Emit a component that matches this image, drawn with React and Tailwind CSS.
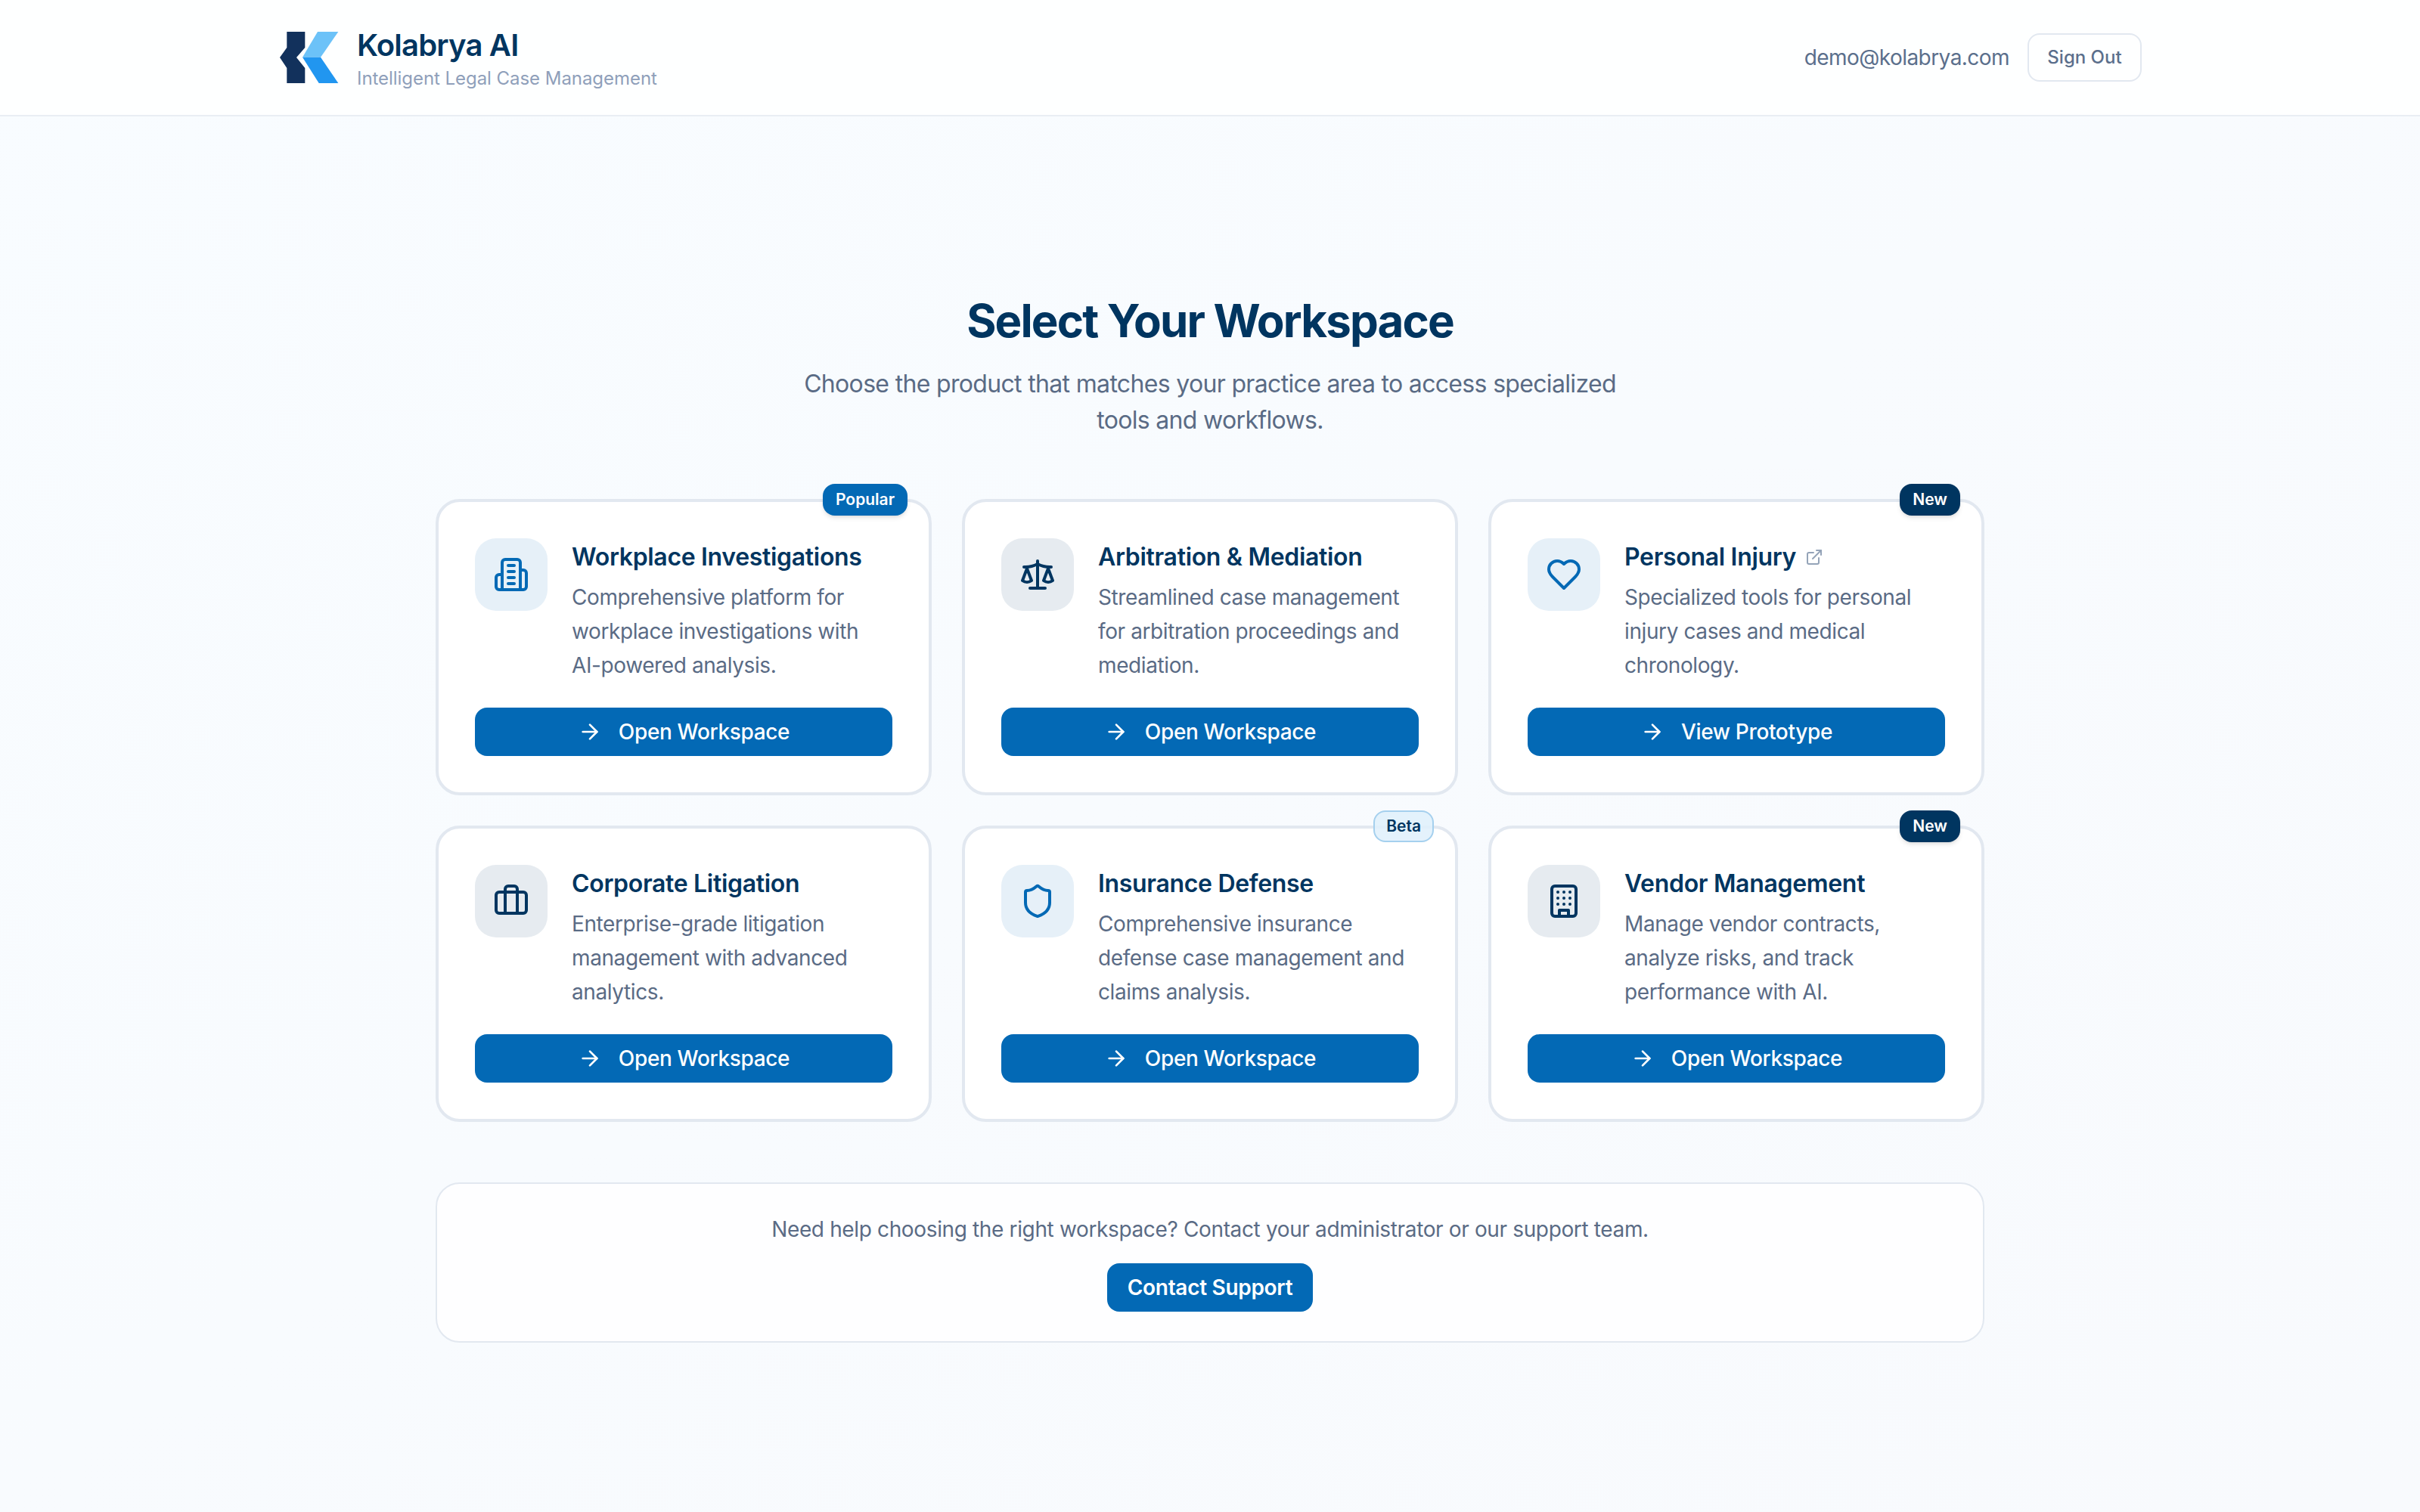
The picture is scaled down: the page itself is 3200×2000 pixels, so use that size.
import { ArrowRight, Scale, Briefcase, Shield, ExternalLink } from 'lucide-react';

const Building2Icon = ({ className }) => (
  <svg viewBox="0 0 24 24" fill="none" stroke="currentColor" strokeWidth="2" strokeLinecap="round" strokeLinejoin="round" className={className}>
    <path d="M6 22V4a2 2 0 0 1 2-2h8a2 2 0 0 1 2 2v18Z" />
    <path d="M6 12H4a2 2 0 0 0-2 2v6a2 2 0 0 0 2 2h2" />
    <path d="M18 9h2a2 2 0 0 1 2 2v9a2 2 0 0 1-2 2h-2" />
    <path d="M10 6h4" />
    <path d="M10 10h4" />
    <path d="M10 14h4" />
    <path d="M10 18h4" />
  </svg>
);

const HeartIcon = ({ className }) => (
  <svg viewBox="0 0 24 24" fill="none" stroke="currentColor" strokeWidth="2" strokeLinecap="round" strokeLinejoin="round" className={className}>
    <path d="M19 14c1.49-1.46 3-3.21 3-5.5A5.5 5.5 0 0 0 16.5 3c-1.76 0-3 .5-4.5 2-1.5-1.5-2.74-2-4.5-2A5.5 5.5 0 0 0 2 8.5c0 2.3 1.5 4.05 3 5.5l7 7Z" />
  </svg>
);

const BuildingIcon = ({ className }) => (
  <svg viewBox="0 0 24 24" fill="none" stroke="currentColor" strokeWidth="2" strokeLinecap="round" strokeLinejoin="round" className={className}>
    <rect x="4" y="2" width="16" height="20" rx="2" />
    <path d="M9 22v-4h6v4" />
    <path d="M8 6h.01M16 6h.01M12 6h.01M12 10h.01M12 14h.01M16 10h.01M16 14h.01M8 10h.01M8 14h.01" />
  </svg>
);

const Logo = () => (
  <svg viewBox="0 0 80 80" className="w-[80px] h-[80px] shrink-0">
    <path fill="#12315c" d="M11.3 6H35.3V27L24 40L35.3 54V74H11.3V54L2 40L11.3 27Z" />
    <path fill="#6cc2f8" d="M52 6H79.3L56 39.7H32Z" />
    <path fill="#2196f0" d="M32 39.7H56L79.3 74H53.7Z" />
  </svg>
);

const badgeStyles = {
  Popular: 'px-[17px] bg-[#0369b5] text-white shadow-md',
  New: 'px-[17px] bg-[#003560] text-white shadow-md',
  Beta: 'px-[15px] bg-[#dff0fc]/85 text-[#003560] border-2 border-[#a5d0ee]',
};

const products = [
  {
    title: 'Workplace Investigations',
    desc: 'Comprehensive platform for workplace investigations with AI-powered analysis.',
    icon: Building2Icon,
    tint: 'blue',
    badge: 'Popular',
    action: 'Open Workspace',
  },
  {
    title: 'Arbitration & Mediation',
    desc: 'Streamlined case management for arbitration proceedings and mediation.',
    icon: Scale,
    tint: 'navy',
    action: 'Open Workspace',
  },
  {
    title: 'Personal Injury',
    desc: 'Specialized tools for personal injury cases and medical chronology.',
    icon: HeartIcon,
    tint: 'blue',
    badge: 'New',
    action: 'View Prototype',
    external: true,
  },
  {
    title: 'Corporate Litigation',
    desc: 'Enterprise-grade litigation management with advanced analytics.',
    icon: Briefcase,
    tint: 'navy',
    action: 'Open Workspace',
  },
  {
    title: 'Insurance Defense',
    desc: 'Comprehensive insurance defense case management and claims analysis.',
    icon: Shield,
    tint: 'blue',
    badge: 'Beta',
    action: 'Open Workspace',
  },
  {
    title: 'Vendor Management',
    desc: 'Manage vendor contracts, analyze risks, and track performance with AI.',
    icon: BuildingIcon,
    tint: 'navy',
    badge: 'New',
    action: 'Open Workspace',
  },
];

const ProductCard = ({ product }) => {
  const Icon = product.icon;
  return (
    <div className="relative h-[392px] bg-white border-4 border-[#e2e8f0] rounded-[32px] p-[48px] flex flex-col">
      {product.badge && (
        <span
          className={`absolute top-[-24px] right-[28px] h-[42px] flex items-center rounded-[16px] text-[21px] font-semibold ${badgeStyles[product.badge]}`}
        >
          {product.badge}
        </span>
      )}
      <div className="flex gap-[32px] h-[224px]">
        <div
          className={`w-[96px] h-[96px] shrink-0 rounded-[28px] flex items-center justify-center ${
            product.tint === 'blue' ? 'bg-[#e6f0f8] text-[#0369b5]' : 'bg-[#e6ebf0] text-[#003560]'
          }`}
        >
          <Icon className="w-[48px] h-[48px]" />
        </div>
        <div className="min-w-0">
          <h3 className="flex items-center gap-[12px] h-[49px] mb-[7px] text-[32px] font-semibold text-[#003560] tracking-[-0.01em]">
            {product.title}
            {product.external && <ExternalLink className="w-[24px] h-[24px] text-[#94a3b8]" />}
          </h3>
          <p className="text-[28px] leading-[44.8px] tracking-[-0.4px] text-[#5a6b85]">{product.desc}</p>
        </div>
      </div>
      <button className="h-[64px] w-full rounded-[16px] bg-[#0369b5] text-white text-[28px] font-[550] tracking-[-0.35px] flex items-center justify-center gap-[22px]">
        <ArrowRight className="w-[32px] h-[32px]" />
        {product.action}
      </button>
    </div>
  );
};

const App = () => {
  return (
    <div className="min-h-screen font-[Inter,sans-serif] bg-gradient-to-br from-[#f8fcff] to-[#f8fafd]">
      {/* Header */}
      <header className="h-[154px] bg-white/90 border-b-2 border-[#e9eef4]">
        <div className="max-w-[2560px] mx-auto h-full px-[48px] flex items-center justify-between">
          <div className="flex items-center gap-[24px]">
            <Logo />
            <div className="pt-[6px]">
              <div className="text-[40px] leading-[48px] font-semibold text-[#003560] tracking-[-0.02em]">Kolabrya AI</div>
              <div className="mt-[2px] text-[24px] leading-[36px] tracking-[-0.05px] text-[#8f9fba]">Intelligent Legal Case Management</div>
            </div>
          </div>
          <div className="flex items-center gap-[24px]">
            <span className="text-[28px] tracking-[-0.55px] text-[#5b6f8c]">demo@kolabrya.com</span>
            <button className="h-[64px] w-[151px] rounded-[16px] border-2 border-[#e2e8f0] text-[24px] font-medium text-[#5b6f8c]">
              Sign Out
            </button>
          </div>
        </div>
      </header>

      {/* Main */}
      <main className="max-w-[2048px] mx-auto pt-[234px]">
        <div className="text-center mb-[80px]">
          <h1 className="text-[60px] leading-[72px] font-bold text-[#003560] tracking-[-0.031em] mb-[24px]">Select Your Workspace</h1>
          <p className="max-w-[1120px] mx-auto text-[32px] leading-[48px] tracking-[-0.67px] text-[#5a6b85]">
            Choose the product that matches your practice area to access specialized tools and workflows.
          </p>
        </div>

        <div className="grid grid-cols-3 gap-[40px]">
          {products.map((product) => (
            <ProductCard key={product.title} product={product} />
          ))}
        </div>

        <div className="mt-[80px] h-[212px] bg-white/80 border-2 border-[#e2e8f0] rounded-[32px] pt-[38px] flex flex-col items-center">
          <p className="text-[28px] leading-[44.8px] tracking-[-0.36px] text-[#5a6b85] mb-[22px]">
            Need help choosing the right workspace? Contact your administrator or our support team.
          </p>
          <button className="h-[64px] w-[272px] rounded-[16px] bg-[#0369b5] text-white text-[28px] font-semibold tracking-[-0.3px]">
            Contact Support
          </button>
        </div>
      </main>
    </div>
  );
};

export default App;
